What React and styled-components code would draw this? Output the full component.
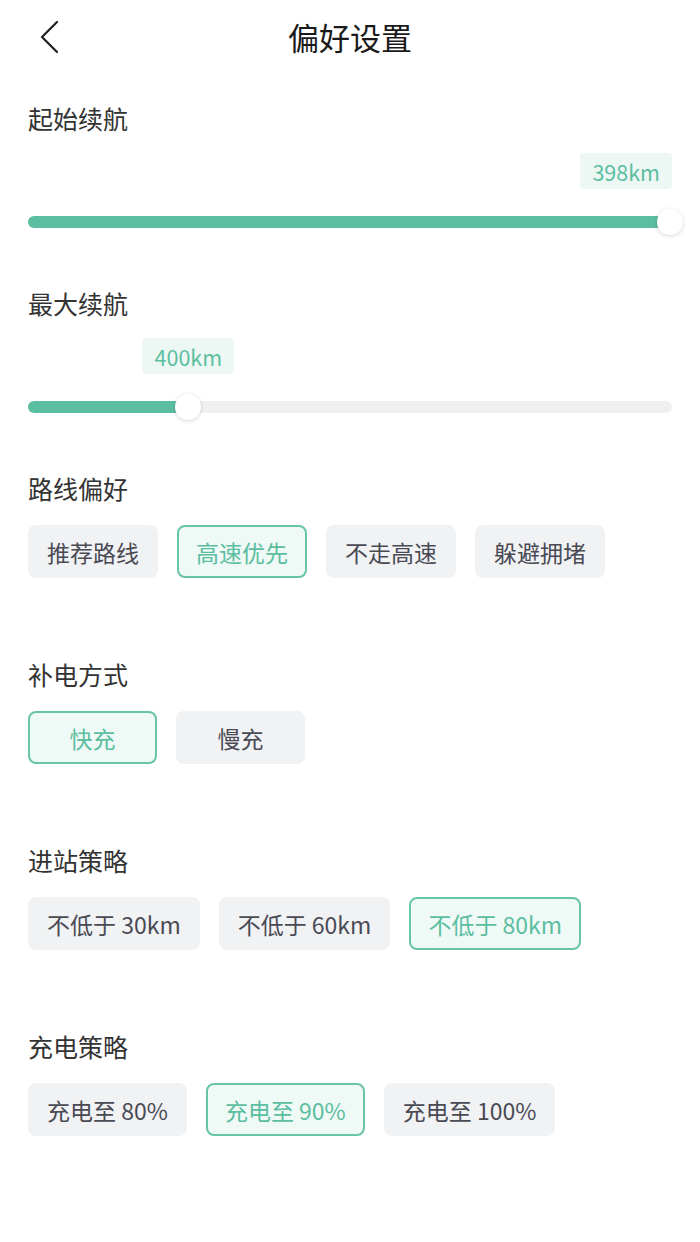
import React from 'react'
import styled, { createGlobalStyle } from 'styled-components'

const GlobalStyle = createGlobalStyle`
  html, body {
    margin: 0;
    padding: 0;
    background: #fff;
  }
  body {
    font-family: "Noto Sans CJK SC", "Noto Sans", sans-serif;
    -webkit-font-smoothing: antialiased;
  }
`

const GREEN = '#5cbea0'

const sliders = [
  { title: '起始续航', value: '398km', pct: 99.7 },
  { title: '最大续航', value: '400km', pct: 24.9 }
]

const groups = [
  { title: '路线偏好', options: ['推荐路线', '高速优先', '不走高速', '躲避拥堵'], selected: 1 },
  { title: '补电方式', options: ['快充', '慢充'], selected: 0 },
  { title: '进站策略', options: ['不低于 30km', '不低于 60km', '不低于 80km'], selected: 2 },
  { title: '充电策略', options: ['充电至 80%', '充电至 90%', '充电至 100%'], selected: 1 }
]

const BackIcon = () => (
  <svg width="22" height="34" viewBox="0 0 22 34" fill="none">
    <path d="M18 2 L3 17 L18 32" stroke="#1f1f1f" strokeWidth="2.2" strokeLinecap="round" strokeLinejoin="round" />
  </svg>
)

// tooltip follows the thumb, pinned to the right edge near the end
const RangeSlider = ({ value, pct }) => {
  const tipStyle = pct > 90
    ? { right: 0 }
    : { left: `${pct}%`, transform: 'translateX(-50%)' }
  return (
    <SliderBox>
      <Tip style={tipStyle}>{value}</Tip>
      <Track>
        <Fill style={{ width: `${pct}%` }} />
        <Thumb style={{ left: `${pct}%` }} />
      </Track>
    </SliderBox>
  )
}

export default function App() {
  return (
    <Page>
      <GlobalStyle />
      <Header>
        <BackButton><BackIcon /></BackButton>
        <Title>偏好设置</Title>
      </Header>
      <Content>
        {sliders.map(s => (
          <Section key={s.title} gap={60}>
            <Label>{s.title}</Label>
            <RangeSlider value={s.value} pct={s.pct} />
          </Section>
        ))}
        {groups.map(g => (
          <Section key={g.title} gap={81}>
            <Label>{g.title}</Label>
            <ChipRow>
              {g.options.map((o, i) => (
                <Chip key={o} active={i === g.selected}>{o}</Chip>
              ))}
            </ChipRow>
          </Section>
        ))}
      </Content>
    </Page>
  )
}

const Page = styled.div`
  width: 700px;
  min-height: 1242px;
  background: #fff;
`,
Header = styled.div`
  height: 74px;
  display: grid;
  grid-template-columns: 100px 1fr 100px;
  align-items: center;
`,
BackButton = styled.div`
  padding-left: 39px;
  display: flex;
  align-items: center;
  height: 100%;
`,
Title = styled.h1`
  margin: 0;
  text-align: center;
  font-size: 31px;
  font-weight: 400;
  color: #1a1a1a;
  line-height: 74px;
`,
Content = styled.div`
  padding: 29px 28px 0;
`,
Section = styled.section`
  margin-bottom: ${props => props.gap}px;
`,
Label = styled.div`
  font-size: 25px;
  line-height: 30px;
  height: 30px;
  color: #333;
`,
SliderBox = styled.div`
  position: relative;
  margin-top: 20px;
  padding-top: 63px;
`,
Tip = styled.div`
  position: absolute;
  top: 0;
  height: 36px;
  padding: 0 12px;
  display: flex;
  align-items: center;
  border-radius: 4px;
  background: #edf8f4;
  color: ${GREEN};
  font-size: 21.5px;
  white-space: nowrap;
`,
Track = styled.div`
  position: relative;
  height: 12px;
  border-radius: 6px;
  background: #f0f0f2;
`,
Fill = styled.div`
  height: 100%;
  border-radius: 6px;
  background: ${GREEN};
`,
Thumb = styled.div`
  position: absolute;
  top: 50%;
  width: 26px;
  height: 26px;
  border-radius: 50%;
  background: #fff;
  transform: translate(-50%, -50%);
  box-shadow: 0 1px 4px rgba(0, 0, 0, 0.16);
`,
ChipRow = styled.div`
  margin-top: 22px;
  display: flex;
  gap: 19px;
`,
Chip = styled.div`
  box-sizing: border-box;
  min-width: 129px;
  height: 53px;
  padding: 0 17px;
  display: flex;
  align-items: center;
  justify-content: center;
  border-radius: 8px;
  font-size: 23px;
  white-space: nowrap;
  border: 2px solid ${props => props.active ? '#68c4a8' : 'transparent'};
  background: ${props => props.active ? '#eff9f6' : '#f1f2f4'};
  color: ${props => props.active ? GREEN : '#4a4a55'};
`
